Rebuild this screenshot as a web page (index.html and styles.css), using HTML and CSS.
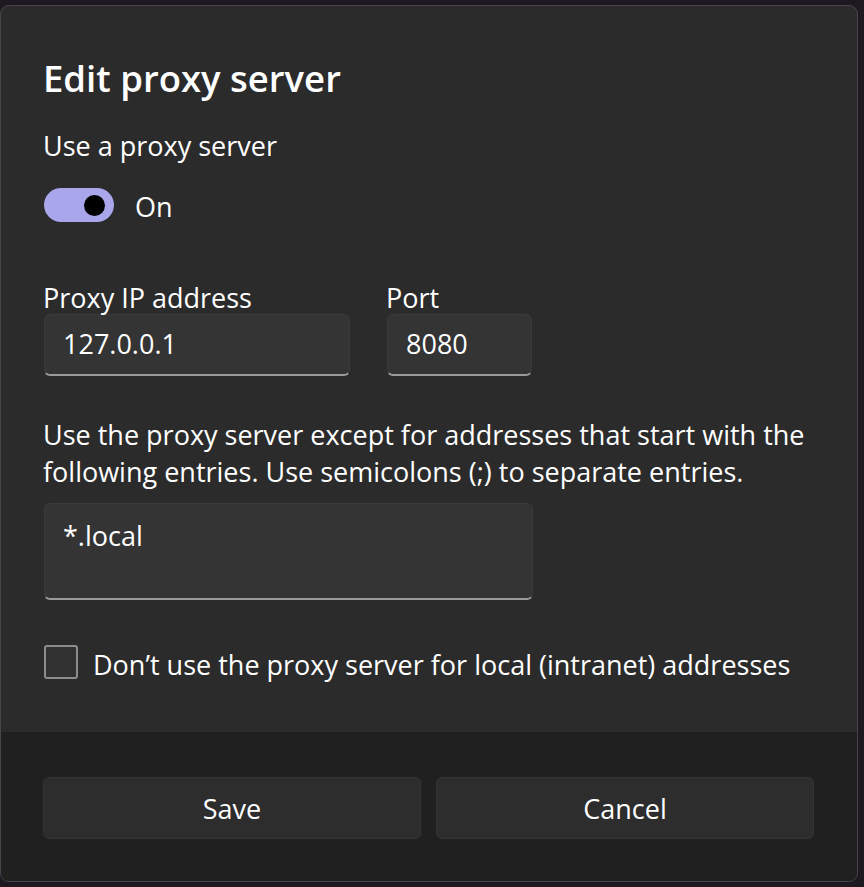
FILE: index.html
```html
<!DOCTYPE html>
<html>
<head>
<meta charset="utf-8">
<link rel="stylesheet" href="styles.css">
</head>
<body>
<div class="dialog">
  <div class="content">
    <h1 class="title">Edit proxy server</h1>
    <div class="label">Use a proxy server</div>
    <div class="toggle-row">
      <span class="toggle"><span class="knob"></span></span>
      <span class="toggle-text">On</span>
    </div>
    <div class="fields">
      <div class="field ip">
        <div class="label">Proxy IP address</div>
        <div class="input">127.0.0.1</div>
      </div>
      <div class="field port">
        <div class="label">Port</div>
        <div class="input">8080</div>
      </div>
    </div>
    <p class="desc">Use the proxy server except for addresses that start with the following entries. Use semicolons (;) to separate entries.</p>
    <div class="input textarea">*.local</div>
    <div class="check-row">
      <span class="checkbox"></span>
      <span class="check-text">Don’t use the proxy server for local (intranet) addresses</span>
    </div>
  </div>
  <div class="footer">
    <button class="btn">Save</button>
    <button class="btn">Cancel</button>
  </div>
</div>
</body>
</html>
```
FILE: styles.css
```css
html, body {
  margin: 0;
  padding: 0;
  background: #1c1920;
}
body {
  font-family: "Open Sans", "Noto Sans", sans-serif;
  color: #ffffff;
  height: 887px;
  overflow: hidden;
}
.dialog {
  margin: 5px 4px 0 0;
  width: 858px;
  height: 877px;
  box-sizing: border-box;
  background: #2b2b2b;
  border: 1px solid #47454b;
  border-radius: 9px;
  overflow: hidden;
  display: flex;
  flex-direction: column;
}
.content {
  flex: 1;
  padding: 0 0 0 42px;
}
.title {
  margin: 49px 0 0 0;
  font-size: 36.5px;
  font-weight: 600;
  line-height: 46px;
}
.label {
  font-size: 27px;
  line-height: 36px;
}
.content > .label {
  margin-top: 27px;
}
.toggle-row {
  display: flex;
  align-items: center;
  gap: 21px;
  margin-top: 24px;
  height: 34px;
  padding-left: 1px;
}
.toggle {
  width: 70px;
  height: 34px;
  border-radius: 17px;
  background: #aaa6ec;
  display: flex;
  align-items: center;
  justify-content: flex-end;
  padding-right: 9px;
  box-sizing: border-box;
}
.knob {
  width: 21px;
  height: 21px;
  border-radius: 50%;
  background: #000;
}
.toggle-text {
  font-size: 27px;
  line-height: 34px;
  margin-top: 3px;
}
.fields {
  display: flex;
  gap: 36px;
  margin-top: 62px;
}
.field.ip { width: 307px; }
.field.port { width: 146px; }
.field .label {
  line-height: 28px;
  margin-bottom: 2px;
}
.input {
  background: #343434;
  border-radius: 6px;
  border: 1px solid #3a3a3a;
  border-bottom: 2px solid #9b9b9b;
  height: 62px;
  box-sizing: border-box;
  padding: 0 0 0 18px;
  font-size: 27px;
  line-height: 58px;
}
.field .input {
  margin-left: 1px;
}
.desc {
  margin: 40px 0 0 0;
  font-size: 27px;
  line-height: 37px;
  width: 800px;
}
.textarea {
  margin-top: 13px;
  margin-left: 1px;
  width: 489px;
  height: 97px;
  padding-top: 3px;
}
.check-row {
  display: flex;
  align-items: center;
  gap: 15px;
  margin-top: 44px;
  height: 36px;
  padding-left: 1px;
}
.checkbox {
  width: 34px;
  height: 34px;
  box-sizing: border-box;
  border: 2px solid #8c8c8c;
  border-radius: 3px;
  background: #313131;
}
.check-text {
  font-size: 27px;
  line-height: 36px;
  margin-top: 6px;
}
.footer {
  height: 149px;
  background: #202020;
  border-top: 1px solid #1d1d1d;
  box-sizing: border-box;
  display: flex;
  gap: 15px;
  padding: 44px 43px 0 42px;
}
.btn {
  flex: 1;
  height: 62px;
  background: #2d2d2d;
  border: 1px solid #333333;
  border-radius: 6px;
  color: #ffffff;
  font-family: "Open Sans", "Noto Sans", sans-serif;
  font-size: 27px;
}
```
